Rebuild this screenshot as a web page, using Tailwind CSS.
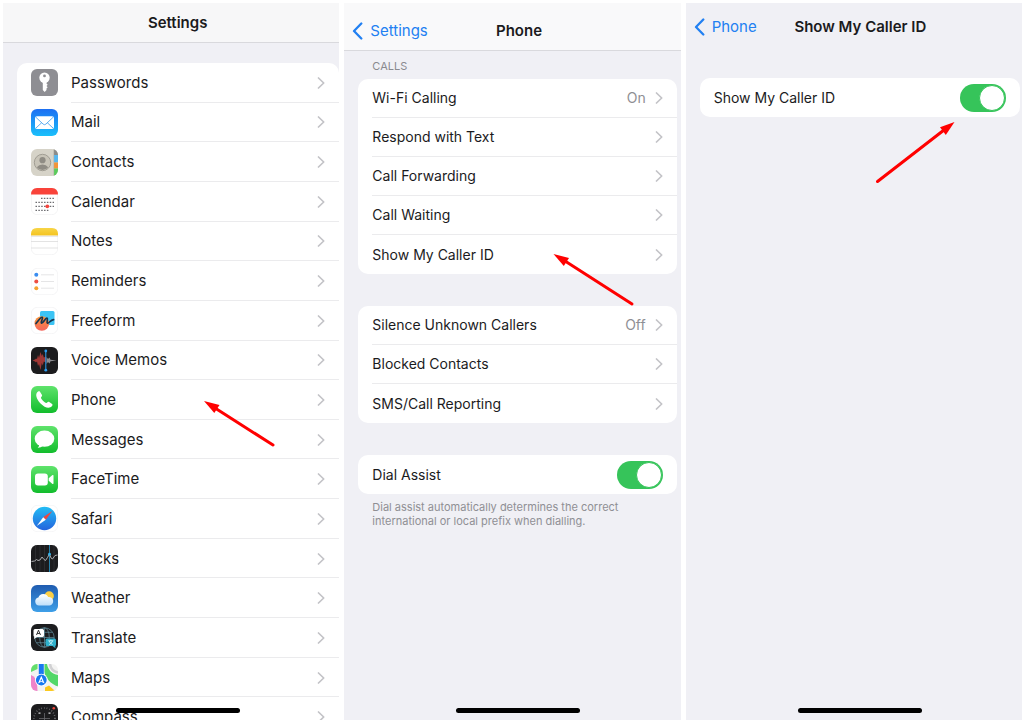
<!DOCTYPE html>
<html lang="en">
<head>
<meta charset="utf-8">
<meta name="viewport" content="width=device-width, initial-scale=1">
<title>Show My Caller ID</title>
<script src="https://cdn.jsdelivr.net/npm/@tailwindcss/browser@4"></script>
</head>
<body class="bg-white font-['Inter','Liberation_Sans',sans-serif] text-[15px] leading-5 text-[#1b1b1d]">
<!-- shared symbols and gradients; kept rendered at zero size so that the gradients resolve -->
<svg class="absolute size-0" aria-hidden="true">
  <symbol id="chev" viewBox="0 0 8 12"><path d="M1.5 1 6.7 6 1.5 11" fill="none" stroke="#c3c3c7" stroke-width="1.7" stroke-linecap="round" stroke-linejoin="round"/></symbol>
  <symbol id="back" viewBox="0 0 11 18"><path d="M9.3 1.5 2 9l7.3 7.5" fill="none" stroke="#2280f2" stroke-width="2.3" stroke-linecap="round" stroke-linejoin="round"/></symbol>
  <linearGradient id="gMail" x2="0" y2="1"><stop stop-color="#1d6ff2"/><stop offset="1" stop-color="#1ac0fb"/></linearGradient>
  <linearGradient id="gGreen" x2="0" y2="1"><stop stop-color="#5fe36c"/><stop offset="1" stop-color="#12bd2c"/></linearGradient>
  <linearGradient id="gYellow" x2="0" y2="1"><stop stop-color="#f8d547"/><stop offset="1" stop-color="#f4c320"/></linearGradient>
  <linearGradient id="gSafari" x2="0" y2="1"><stop stop-color="#22bdf5"/><stop offset="1" stop-color="#2464dd"/></linearGradient>
  <linearGradient id="gSky" x2="0" y2="1"><stop stop-color="#1f5cb0"/><stop offset="1" stop-color="#3e9fe8"/></linearGradient>
  <linearGradient id="gCloud" x2="0" y2="1"><stop stop-color="#ffffff"/><stop offset="1" stop-color="#bfe0fa"/></linearGradient>
  <linearGradient id="gCoral" x2="0" y2="1"><stop stop-color="#fb9a3c"/><stop offset="1" stop-color="#f4655c"/></linearGradient>
  <clipPath id="tile"><rect width="27" height="27" rx="6"/></clipPath>
</svg>

<main class="grid h-screen grid-cols-3 gap-[5px] py-[3px] pr-[2px] pl-[3px]">

  <section class="relative overflow-hidden bg-[#f0f0f5]">
    <header class="h-10 border-b border-[#d9d9dd] bg-[#f7f7f8]">
      <div class="flex h-full w-[calc(100%+13px)] items-center justify-center"><h1 class="font-semibold">Settings</h1></div>
    </header>
    <ul class="mt-5 ml-[14px] grid min-h-[674px] auto-rows-fr rounded-t-[10px] bg-white">
      <li><a href="#" class="flex h-full items-center gap-[13px] pl-[14px]">
        <svg class="size-[27px] shrink-0" viewBox="0 0 27 27"><rect width="27" height="27" rx="6" fill="#8e8e93"/><circle cx="13.5" cy="8.8" r="5.2" fill="#fff"/><circle cx="13.5" cy="6.9" r="1.4" fill="#8e8e93"/><path d="M11.8 12h3.7v2.5l1.2 1.2-1.2 1.2 1.2 1.3-1.2 1.2v1.5l-1.8 2-1.9-1.9z" fill="#fff"/></svg>
        <span class="flex h-full flex-1 items-center justify-between border-b border-[#ebebed] pt-px pr-[14px]">Passwords<svg class="h-3 w-2"><use href="#chev"/></svg></span></a></li>
      <li><a href="#" class="flex h-full items-center gap-[13px] pl-[14px]">
        <svg class="size-[27px] shrink-0" viewBox="0 0 27 27"><rect width="27" height="27" rx="6" fill="url(#gMail)"/><rect x="4" y="7.3" width="19" height="12.6" rx="2" fill="#fff"/><path d="m4.8 8.2 7.3 6.9q1.4 1.2 2.8 0l7.3-6.9M4.800 19.200l6-5.600m11.400 5.600-6-5.600" fill="none" stroke="#4ba4ee" stroke-width=".9"/></svg>
        <span class="flex h-full flex-1 items-center justify-between border-b border-[#ebebed] pt-px pr-[14px]">Mail<svg class="h-3 w-2"><use href="#chev"/></svg></span></a></li>
      <li><a href="#" class="flex h-full items-center gap-[13px] pl-[14px]">
        <svg class="size-[27px] shrink-0" viewBox="0 0 27 27"><g clip-path="url(#tile)"><path d="M0 0h27v27H0z" fill="#d6d3c8"/><path d="M23 0h4v6h-4z" fill="#8c8b88"/><path d="M23 6h4v7.500h-4z" fill="#58b7ee"/><path d="M23 13.500h4v6h-4z" fill="#f29439"/><path d="M23 19.500h4V27h-4z" fill="#5bcb5c"/><path d="M22.600 0v27" stroke="#bdb9ad" stroke-width=".8"/><circle cx="11.500" cy="13.500" r="8.200" fill="#c8c4b8" stroke="#9c998f" stroke-width=".9"/><circle cx="11.500" cy="11.200" r="3.100" fill="#8f8c84"/><path d="M5.800 18.200q2-2.700 5.700-2.700t5.700 2.700q-2.200 2.900-5.700 2.900t-5.700-2.900" fill="#8f8c84"/></g></svg>
        <span class="flex h-full flex-1 items-center justify-between border-b border-[#ebebed] pt-px pr-[14px]">Contacts<svg class="h-3 w-2"><use href="#chev"/></svg></span></a></li>
      <li><a href="#" class="flex h-full items-center gap-[13px] pl-[14px]">
        <svg class="size-[27px] shrink-0" viewBox="0 0 27 27"><rect x=".3" y=".3" width="26.400" height="26.400" rx="6" fill="#fff" stroke="#ededee" stroke-width=".6"/><path d="M0 6.500Q.3 0 6 0h15q5.700 0 6 6.500z" fill="#f9433a"/><path d="M10 10.300h13M4.500 14.300H23M4.500 18.300H23M4.500 22.300h13" stroke="#6c6c70" stroke-width="1.300" stroke-dasharray="1.500 1.350"/><circle cx="16.300" cy="18.300" r="1.900" fill="#f4453e"/></svg>
        <span class="flex h-full flex-1 items-center justify-between border-b border-[#ebebed] pt-px pr-[14px]">Calendar<svg class="h-3 w-2"><use href="#chev"/></svg></span></a></li>
      <li><a href="#" class="flex h-full items-center gap-[13px] pl-[14px]">
        <svg class="size-[27px] shrink-0" viewBox="0 0 27 27"><rect x=".3" y=".3" width="26.400" height="26.400" rx="6" fill="#fff" stroke="#ededee" stroke-width=".6"/><path d="M0 7.500V6q0-6 6-6h15q6 0 6 6v1.500z" fill="url(#gYellow)"/><path d="M0 8.300h27M0 13.500h27M0 20h27" stroke="#dcdcdc" stroke-width=".8"/></svg>
        <span class="flex h-full flex-1 items-center justify-between border-b border-[#ebebed] pt-px pr-[14px]">Notes<svg class="h-3 w-2"><use href="#chev"/></svg></span></a></li>
      <li><a href="#" class="flex h-full items-center gap-[13px] pl-[14px]">
        <svg class="size-[27px] shrink-0" viewBox="0 0 27 27"><rect x=".3" y=".3" width="26.400" height="26.400" rx="6" fill="#fff" stroke="#efeff0" stroke-width=".6"/><circle cx="5.300" cy="6.800" r="2" fill="#3b8df0"/><circle cx="5.300" cy="13.500" r="2" fill="#ee4e43"/><circle cx="5.300" cy="20.200" r="2" fill="#f5a32f"/><path d="M10 6.800h13M10 13.500h13M10 20.200h13" stroke="#dedee0" stroke-width=".8"/></svg>
        <span class="flex h-full flex-1 items-center justify-between border-b border-[#ebebed] pt-px pr-[14px]">Reminders<svg class="h-3 w-2"><use href="#chev"/></svg></span></a></li>
      <li><a href="#" class="flex h-full items-center gap-[13px] pl-[14px]">
        <svg class="size-[27px] shrink-0" viewBox="0 0 27 27"><rect x=".3" y=".3" width="26.400" height="26.400" rx="6" fill="#fff" stroke="#efeff0" stroke-width=".6"/><rect x="9" y="4" width="14.500" height="14" rx="1.500" fill="#3cc4f4"/><circle cx="10.800" cy="16.500" r="7.300" fill="url(#gCoral)"/><path d="M5 16.500c2.500-3 5-7 6.200-6.200 1.300.8-2 5.300-.6 5.800 1.500.4 3.800-5.600 5.400-5 1.400.6-.8 4.400.4 5 1.600.6 2.600-3 6.200-3.500" fill="none" stroke="#15354f" stroke-width="1.700" stroke-linecap="round"/></svg>
        <span class="flex h-full flex-1 items-center justify-between border-b border-[#ebebed] pt-px pr-[14px]">Freeform<svg class="h-3 w-2"><use href="#chev"/></svg></span></a></li>
      <li><a href="#" class="flex h-full items-center gap-[13px] pl-[14px]">
        <svg class="size-[27px] shrink-0" viewBox="0 0 27 27"><rect width="27" height="27" rx="6" fill="#1c1c1e"/><path d="M1.500 13.500 4 12.500 5 11.500 6 12 7 8l1 3 1.500-6 1.300 4 1-2 1 3.500 2-1v6l-2-1-1 4-1-2.500L9.500 23 8 17l-1 2-1-4.500-1 1-1-1z" fill="#a03735"/><path d="m15.500 10 1.500 2 1.500-1.500 1 2.300 6 .7-6 .7-1 2.300L17 15l-1.500 2z" fill="#8c8c90"/><path d="M14.800 4.500v18.500" stroke="#2d9df0" stroke-width="1"/><circle cx="14.800" cy="4" r="1.400" fill="#2d9df0"/><circle cx="14.800" cy="23.200" r="1.400" fill="#2d9df0"/></svg>
        <span class="flex h-full flex-1 items-center justify-between border-b border-[#ebebed] pt-px pr-[14px]">Voice Memos<svg class="h-3 w-2"><use href="#chev"/></svg></span></a></li>
      <li><a href="#" class="flex h-full items-center gap-[13px] pl-[14px]">
        <svg class="size-[27px] shrink-0" viewBox="0 0 27 27"><rect width="27" height="27" rx="6" fill="url(#gGreen)"/><path d="M5.600 7.200C6.800 5.200 8.300 4.800 9 5.700l2 3.200c.5 1-.9 1.800-1 2.700-.2 1.400 3.700 5.300 5.300 5.300 1 0 1.600-1.500 2.600-1.100l3.200 2.100c1 .8.300 2.200-1.700 3.300-2.600 1.400-6.500-.4-9.600-3.500s-5.500-7.700-4.200-10.500" fill="#fff"/></svg>
        <span class="flex h-full flex-1 items-center justify-between border-b border-[#ebebed] pt-px pr-[14px]">Phone<svg class="h-3 w-2"><use href="#chev"/></svg></span></a></li>
      <li><a href="#" class="flex h-full items-center gap-[13px] pl-[14px]">
        <svg class="size-[27px] shrink-0" viewBox="0 0 27 27"><rect width="27" height="27" rx="6" fill="url(#gGreen)"/><ellipse cx="13.500" cy="12.700" rx="9.800" ry="8.100" fill="#fff"/><path d="M8.200 18.500q.2 2-1.500 3.300 3.200.1 5-1.800z" fill="#fff"/></svg>
        <span class="flex h-full flex-1 items-center justify-between border-b border-[#ebebed] pt-px pr-[14px]">Messages<svg class="h-3 w-2"><use href="#chev"/></svg></span></a></li>
      <li><a href="#" class="flex h-full items-center gap-[13px] pl-[14px]">
        <svg class="size-[27px] shrink-0" viewBox="0 0 27 27"><rect width="27" height="27" rx="6" fill="url(#gGreen)"/><rect x="4" y="7.500" width="12.800" height="12" rx="3" fill="#fff"/><path d="m17.700 12.200 3.800-3.100q1-.6 1 .6v7.600q0 1.200-1 .6l-3.800-3.100z" fill="#fff"/></svg>
        <span class="flex h-full flex-1 items-center justify-between border-b border-[#ebebed] pt-px pr-[14px]">FaceTime<svg class="h-3 w-2"><use href="#chev"/></svg></span></a></li>
      <li><a href="#" class="flex h-full items-center gap-[13px] pl-[14px]">
        <svg class="size-[27px] shrink-0" viewBox="0 0 27 27"><rect x=".3" y=".3" width="26.400" height="26.400" rx="6" fill="#fff" stroke="#f0f0f1" stroke-width=".6"/><circle cx="13.500" cy="13.500" r="11.700" fill="url(#gSafari)"/><path d="m21.300 6-9.100 6.200 2.600 2.600z" fill="#f0473e"/><path d="m5.700 21 6.500-8.800 2.600 2.600z" fill="#fff"/></svg>
        <span class="flex h-full flex-1 items-center justify-between border-b border-[#ebebed] pt-px pr-[14px]">Safari<svg class="h-3 w-2"><use href="#chev"/></svg></span></a></li>
      <li><a href="#" class="flex h-full items-center gap-[13px] pl-[14px]">
        <svg class="size-[27px] shrink-0" viewBox="0 0 27 27"><rect width="27" height="27" rx="6" fill="#1c1c1e"/><path d="M4.500 0v27M9 0v27M13.500 0v27M23 0v27" stroke="#38383b" stroke-width=".6"/><path d="M18.500 0v27" stroke="#247fa8" stroke-width="1"/><path d="m.5 16.500 3-.5 2-1.500 1.500 1 2-.5 2-3 2 2.500 1.500 1 2-3L18.500 9l1.500 4 1.500 1 2.500-3.500 2.500-.5" fill="none" stroke="#b9b9bc" stroke-width=".9"/><circle cx="18.500" cy="9.200" r="1.400" fill="#35b3ea"/></svg>
        <span class="flex h-full flex-1 items-center justify-between border-b border-[#ebebed] pt-px pr-[14px]">Stocks<svg class="h-3 w-2"><use href="#chev"/></svg></span></a></li>
      <li><a href="#" class="flex h-full items-center gap-[13px] pl-[14px]">
        <svg class="size-[27px] shrink-0" viewBox="0 0 27 27"><rect width="27" height="27" rx="6" fill="url(#gSky)"/><circle cx="18.200" cy="11" r="4.700" fill="#fbcf45"/><path d="M8 20.500a4 4 0 0 1-.6-7.900 5.300 5.300 0 0 1 9.800-.6 4.300 4.300 0 0 1 1.400 8.500z" fill="url(#gCloud)"/></svg>
        <span class="flex h-full flex-1 items-center justify-between border-b border-[#ebebed] pt-px pr-[14px]">Weather<svg class="h-3 w-2"><use href="#chev"/></svg></span></a></li>
      <li><a href="#" class="flex h-full items-center gap-[13px] pl-[14px]">
        <svg class="size-[27px] shrink-0" viewBox="0 0 27 27"><rect width="27" height="27" rx="6" fill="#1c1d1f"/><g fill="none" stroke="#5b8390" stroke-width=".8"><circle cx="13.500" cy="13.500" r="9.700"/><ellipse cx="13.500" cy="13.500" rx="4.800" ry="9.700"/><path d="M13.500 3.800v19.400M3.800 13.500h19.400M5.500 18.700h16M5.500 8.300h16"/></g><path d="M4 5h7.500q1.500 0 1.500 1.500v5q0 1.500-1.500 1.500H6l-3 2 .3-2.300Q2.500 12.300 2.500 11.500v-5Q2.500 5 4 5" fill="#fff"/><path d="m5.500 11 2-4.800 2 4.800M6.200 9.500h2.600" fill="none" stroke="#222" stroke-width=".9"/><path d="M16 14.500h7.500q1.500 0 1.500 1.500v4.500q0 1.200-.8 1.500l.3 2.300-3-2.300H16q-1.500 0-1.500-1.500V16q0-1.500 1.500-1.500" fill="#2fb0cb"/><path d="M17.300 16.800h5M19.800 15.800v1m-1.700 0q1 3 3.500 3.800m0-3.800q-1 3-3.500 3.800" fill="none" stroke="#d7f5fb" stroke-width=".8"/></svg>
        <span class="flex h-full flex-1 items-center justify-between border-b border-[#ebebed] pt-px pr-[14px]">Translate<svg class="h-3 w-2"><use href="#chev"/></svg></span></a></li>
      <li><a href="#" class="flex h-full items-center gap-[13px] pl-[14px]">
        <svg class="size-[27px] shrink-0" viewBox="0 0 27 27"><g clip-path="url(#tile)"><path d="M0 0h27v27H0z" fill="#f3f3f2"/><path d="M0 0h6.500v5L0 8z" fill="#63de6a"/><path d="M13.500 0h2.500c1 6 5 10 11 11v11.500C20 20 14 14 13.500 8z" fill="#52d768"/><path d="M19 0q1 7 8 8.500" fill="none" stroke="#d0d0d2" stroke-width="2.500"/><path d="M0 11q5 2 6 8l.5 8H0z" fill="#ef84c9"/><path d="M14 27v-3.500l4-2L24 27z" fill="#fbc91f"/><path d="M7.800 0h5v12h-5z" fill="#1879f0"/><circle cx="10.300" cy="16" r="6.300" fill="#fff"/><circle cx="10.300" cy="16" r="5.400" fill="#1879f0"/><path d="m10.300 11.800 3.300 7.700-3.300-1.700L7 19.500z" fill="#fff"/><path d="m10.300 14.700 1.100 2.800-1.100-.5-1.100.5z" fill="#1879f0"/></g></svg>
        <span class="flex h-full flex-1 items-center justify-between border-b border-[#ebebed] pt-px pr-[14px]">Maps<svg class="h-3 w-2"><use href="#chev"/></svg></span></a></li>
      <li><a href="#" class="flex h-full items-center gap-[13px] pl-[14px]">
        <svg class="size-[27px] shrink-0" viewBox="0 0 27 27"><rect width="27" height="27" rx="6" fill="#1c1c1e"/><circle cx="13.500" cy="14.500" r="10.500" fill="none" stroke="#77777b" stroke-width="1.600" stroke-dasharray=".7 2"/><path d="M13.500 9v11M8 14.500h11" stroke="#68686c" stroke-width=".8"/><path d="M7.500 9.200h2M17.500 9.200h2" stroke="#d8d8da" stroke-width="1.300"/><circle cx="22.800" cy="4.300" r="1.300" fill="#f0453b"/></svg>
        <span class="flex h-full flex-1 items-center justify-between pr-[14px]">Compass<svg class="h-3 w-2"><use href="#chev"/></svg></span></a></li>
    </ul>
    <div class="absolute bottom-[7px] left-[113px] h-[5px] w-[124px] rounded-full bg-black"></div>
    <svg class="absolute top-[397px] left-[200px] h-[50px] w-[76px]" viewBox="0 0 76 50" aria-hidden="true"><path d="m12 8 58 37" stroke="#ff0000" stroke-width="3" stroke-linecap="round"/><path d="m1 1 15.500 4-5.200 8z" fill="#ff0000"/></svg>
  </section>

  <section class="relative overflow-hidden bg-[#f0f0f5]">
    <header class="h-12 border-b border-[#d9d9dd] bg-[#f9f9fa]">
      <div class="grid h-full w-[calc(100%+13px)] grid-cols-[1fr_auto_1fr] items-center px-2 pt-2">
        <a href="#" class="flex items-center gap-[7px] text-[#2280f2]"><svg class="h-[18px] w-[11px]"><use href="#back"/></svg>Settings</a>
        <h1 class="font-semibold">Phone</h1>
      </div>
    </header>
    <div class="mr-1 ml-[14px] text-sm">
      <h2 class="pt-[7px] pb-[5px] pl-[14px] text-[11px] leading-4 text-[#8a8a8f]">CALLS</h2>
      <ul class="rounded-[10px] bg-white pl-[14px]">
        <li class="border-b border-[#ebebed]"><a href="#" class="flex h-[38px] items-center pr-[14px]">Wi-Fi Calling<span class="mr-[9px] ml-auto text-[#8f8f94]">On</span><svg class="h-3 w-2"><use href="#chev"/></svg></a></li>
        <li class="border-b border-[#ebebed]"><a href="#" class="flex h-[38px] items-center justify-between pr-[14px]">Respond with Text<svg class="h-3 w-2"><use href="#chev"/></svg></a></li>
        <li class="border-b border-[#ebebed]"><a href="#" class="flex h-[38px] items-center justify-between pr-[14px]">Call Forwarding<svg class="h-3 w-2"><use href="#chev"/></svg></a></li>
        <li class="border-b border-[#ebebed]"><a href="#" class="flex h-[38px] items-center justify-between pr-[14px]">Call Waiting<svg class="h-3 w-2"><use href="#chev"/></svg></a></li>
        <li><a href="#" class="flex h-[39px] items-center justify-between pr-[14px]">Show My Caller ID<svg class="h-3 w-2"><use href="#chev"/></svg></a></li>
      </ul>
      <ul class="mt-8 rounded-[10px] bg-white pl-[14px]">
        <li class="border-b border-[#ebebed]"><a href="#" class="flex h-[38px] items-center pr-[14px]">Silence Unknown Callers<span class="mr-[9px] ml-auto text-[#8f8f94]">Off</span><svg class="h-3 w-2"><use href="#chev"/></svg></a></li>
        <li class="border-b border-[#ebebed]"><a href="#" class="flex h-[38px] items-center justify-between pr-[14px]">Blocked Contacts<svg class="h-3 w-2"><use href="#chev"/></svg></a></li>
        <li><a href="#" class="flex h-[39px] items-center justify-between pr-[14px]">SMS/Call Reporting<svg class="h-3 w-2"><use href="#chev"/></svg></a></li>
      </ul>
      <label class="mt-8 flex h-[39px] items-center justify-between rounded-[10px] bg-white px-[14px]">Dial Assist
        <input type="checkbox" role="switch" checked class="flex h-7 w-[46px] appearance-none items-center rounded-full bg-[#c7c7cc] p-px before:size-[26px] before:rounded-full before:border before:border-[#36c45a] before:bg-white checked:justify-end checked:bg-[#36c45a]">
      </label>
      <p class="pt-[6px] pl-[14px] text-[11px] leading-[14px] text-[#8f8f94]">Dial assist automatically determines the correct<br>international or local prefix when dialling.</p>
    </div>
    <div class="absolute bottom-[7px] left-[112px] h-[5px] w-[124px] rounded-full bg-black"></div>
    <svg class="absolute top-[250px] left-[209px] h-[54px] w-[83px]" viewBox="0 0 83 54" aria-hidden="true"><path d="m12 8 67 43" stroke="#ff0000" stroke-width="3" stroke-linecap="round"/><path d="m.5 1 15.500 4-5.200 8z" fill="#ff0000"/></svg>
  </section>

  <section class="relative overflow-hidden bg-[#f0f0f5]">
    <header class="h-12">
      <div class="grid h-full w-[calc(100%+13px)] grid-cols-[1fr_auto_1fr] items-center px-2">
        <a href="#" class="flex items-center gap-[7px] text-[#2280f2]"><svg class="h-[18px] w-[11px]"><use href="#back"/></svg>Phone</a>
        <h1 class="font-semibold">Show My Caller ID</h1>
      </div>
    </header>
    <label class="mt-[27px] mr-[2px] ml-[14px] flex h-[39px] items-center justify-between rounded-[10px] bg-white px-[14px] text-sm">Show My Caller ID
      <input type="checkbox" role="switch" checked class="flex h-7 w-[46px] appearance-none items-center rounded-full bg-[#c7c7cc] p-px before:size-[26px] before:rounded-full before:border before:border-[#36c45a] before:bg-white checked:justify-end checked:bg-[#36c45a]">
    </label>
    <div class="absolute bottom-[7px] left-[112px] h-[5px] w-[124px] rounded-full bg-black"></div>
    <svg class="absolute top-[118px] left-[189px] h-[64px] w-[81px]" viewBox="0 0 81 64" aria-hidden="true"><path d="M2.500 60.500 69 9" stroke="#ff0000" stroke-width="3" stroke-linecap="round"/><path d="M79.500 1 65 6.300l5.800 7.700z" fill="#ff0000"/></svg>
  </section>
</main>
</body>
</html>
